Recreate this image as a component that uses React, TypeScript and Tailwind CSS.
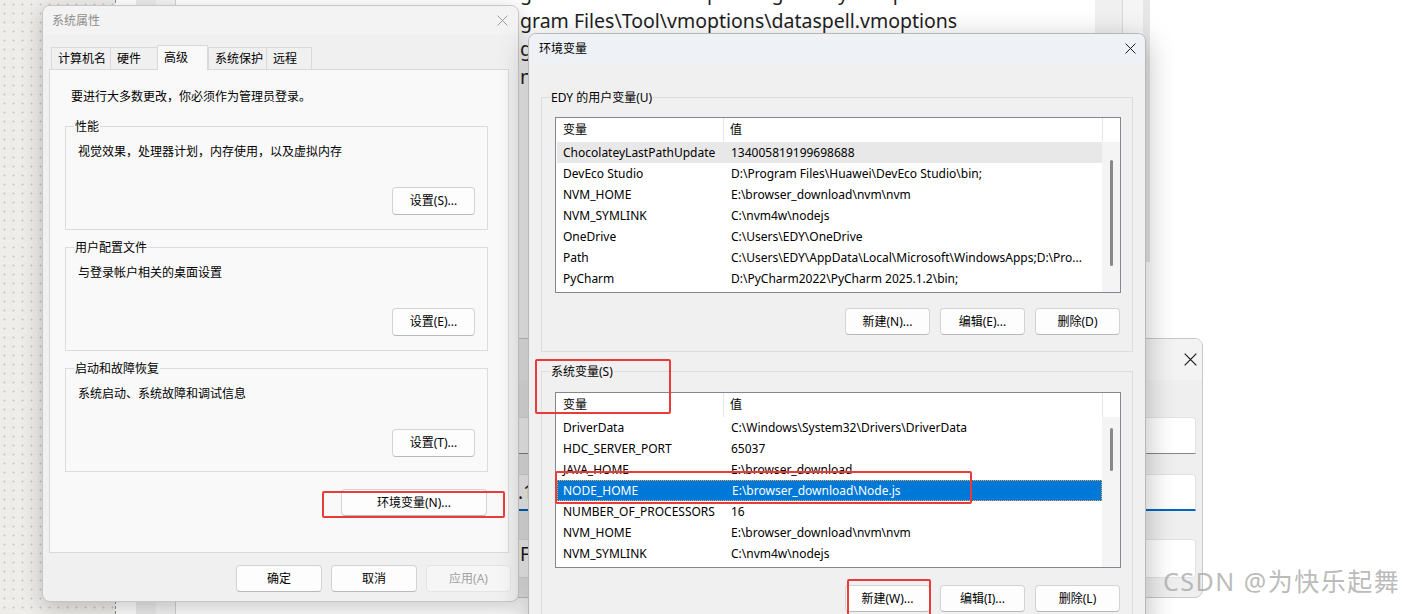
import clsx from "clsx";
import type { ReactNode } from "react";

const UI = "font-['Noto_Sans','Noto_Sans_CJK_SC',sans-serif]";

type Row = { name: string; value: string };

const USER_VARS: Row[] = [
  { name: "ChocolateyLastPathUpdate", value: "134005819199698688" },
  { name: "DevEco Studio", value: "D:\\Program Files\\Huawei\\DevEco Studio\\bin;" },
  { name: "NVM_HOME", value: "E:\\browser_download\\nvm\\nvm" },
  { name: "NVM_SYMLINK", value: "C:\\nvm4w\\nodejs" },
  { name: "OneDrive", value: "C:\\Users\\EDY\\OneDrive" },
  { name: "Path", value: "C:\\Users\\EDY\\AppData\\Local\\Microsoft\\WindowsApps;D:\\Pro..." },
  { name: "PyCharm", value: "D:\\PyCharm2022\\PyCharm 2025.1.2\\bin;" },
];

const SYSTEM_VARS: Row[] = [
  { name: "DriverData", value: "C:\\Windows\\System32\\Drivers\\DriverData" },
  { name: "HDC_SERVER_PORT", value: "65037" },
  { name: "JAVA_HOME", value: "E:\\browser_download" },
  { name: "NODE_HOME", value: "E:\\browser_download\\Node.js" },
  { name: "NUMBER_OF_PROCESSORS", value: "16" },
  { name: "NVM_HOME", value: "E:\\browser_download\\nvm\\nvm" },
  { name: "NVM_SYMLINK", value: "C:\\nvm4w\\nodejs" },
];

function CloseIcon({ className }: { className?: string }) {
  return (
    <svg viewBox="0 0 10 10" className={className} fill="none" stroke="currentColor" strokeWidth={0.9}>
      <path d="M0.5 0.5 L9.5 9.5 M9.5 0.5 L0.5 9.5" />
    </svg>
  );
}

function WinButton({
  children,
  className,
  disabled,
}: {
  children: ReactNode;
  className?: string;
  disabled?: boolean;
}) {
  return (
    <div
      className={clsx(
        "flex shrink-0 items-center justify-center rounded-[4px] border text-[12px] leading-none",
        disabled
          ? "border-[#e3e3e3] bg-[#f6f6f6] text-[#a3a3a3]"
          : "border-[#d3d3d3] border-b-[#b9b9b9] bg-[#fdfdfd] text-black",
        className
      )}
    >
      {children}
    </div>
  );
}

function GroupBox({
  label,
  className,
  children,
}: {
  label: string;
  className?: string;
  children: ReactNode;
}) {
  return (
    <fieldset className={clsx("border border-[#dcdcdc]", className)}>
      <legend className="ml-[8px] px-[1px] text-[12px] leading-[17px] text-black">{label}</legend>
      {children}
    </fieldset>
  );
}

function Tab({ label, width, active }: { label: string; width: string; active?: boolean }) {
  return (
    <div
      className={clsx(
        "flex shrink-0 border-l border-t border-[#d9d9d9] pl-[6px] text-[12px] leading-none text-black",
        width,
        active
          ? "relative z-10 -mb-px h-[25px] items-start border-r bg-[#f9f9f9] pt-[6px]"
          : "h-[22px] items-center bg-[#f0f0f0]"
      )}
    >
      {label}
    </div>
  );
}

function SettingsGroup({ label, desc, button }: { label: string; desc: string; button: string }) {
  return (
    <GroupBox label={label} className="ml-[15px] w-[423px]">
      <div className="flex h-[94px] flex-col">
        <p className="ml-[12px] mt-[8px] text-[12px] leading-[17px]">{desc}</p>
        <WinButton className="mb-[14px] mr-[12px] mt-auto h-[28px] w-[83px] self-end">{button}</WinButton>
      </div>
    </GroupBox>
  );
}

function SystemProperties() {
  return (
    <div className="absolute left-[42px] top-[5px] flex h-[597px] w-[477px] flex-col overflow-hidden rounded-[8px] border border-[#c6c6c6] bg-[#f0f0f0] shadow-[0_6px_22px_rgba(0,0,0,0.22)]">
      <div className="flex h-[29px] shrink-0 items-center justify-between bg-[#f3f3f3] pl-[9px] pr-[10px]">
        <span className="text-[12px] text-[#8e8e8e]">系统属性</span>
        <CloseIcon className="h-[11px] w-[11px] text-[#9a9a9a]" />
      </div>
      <div className="px-[6px] pt-[10px]">
        <div className="flex h-[24px] items-end pl-[2px]">
          <Tab label="计算机名" width="w-[59px]" />
          <Tab label="硬件" width="w-[47px]" />
          <Tab label="高级" width="w-[51px]" active />
          <Tab label="系统保护" width="w-[58px]" />
          <div className="flex h-[22px] w-[46px] shrink-0 items-center border-x border-t border-[#d9d9d9] bg-[#f0f0f0] pl-[6px] text-[12px] leading-none">
            远程
          </div>
        </div>
        <div className="flex h-[484px] w-[460px] flex-col border border-[#d9d9d9] bg-[#f9f9f9]">
          <p className="ml-[21px] mt-[18px] text-[12px] leading-[17px]">要进行大多数更改，你必须作为管理员登录。</p>
          <div className="mt-[13px] flex flex-col gap-[9px]">
            <SettingsGroup label="性能" desc="视觉效果，处理器计划，内存使用，以及虚拟内存" button="设置(S)..." />
            <SettingsGroup label="用户配置文件" desc="与登录帐户相关的桌面设置" button="设置(E)..." />
            <SettingsGroup label="启动和故障恢复" desc="系统启动、系统故障和调试信息" button="设置(T)..." />
          </div>
          <WinButton className="mr-[21px] mt-[17px] h-[27px] w-[146px] self-end">环境变量(N)...</WinButton>
        </div>
      </div>
      <div className="mt-[12px] flex justify-end gap-[9px] pr-[7px]">
        <WinButton className="h-[27px] w-[86px]">确定</WinButton>
        <WinButton className="h-[27px] w-[86px]">取消</WinButton>
        <WinButton className="h-[27px] w-[85px]" disabled>
          应用(A)
        </WinButton>
      </div>
    </div>
  );
}

function VarList({
  rows,
  selected,
  focused,
  thumbTop,
  thumbHeight,
}: {
  rows: Row[];
  selected: number;
  focused?: boolean;
  thumbTop: number;
  thumbHeight: number;
}) {
  return (
    <div className="ml-[13px] flex h-[176px] w-[566px] border border-[#838790] bg-white text-[12px] leading-none text-black">
      <div className="flex min-w-0 flex-1 flex-col">
        <div className="flex h-[24px] shrink-0 items-center">
          <div className="flex h-full w-[168px] items-center border-r border-[#e5e5e5] pl-[7px]">变量</div>
          <div className="pl-[6px]">值</div>
        </div>
        {rows.map((r, i) => {
          const isSel = i === selected;
          return (
            <div
              key={r.name}
              className={clsx(
                "ml-[1px] flex h-[21px] shrink-0 items-center whitespace-nowrap",
                isSel && focused && "border border-dotted border-[#f3a94a] bg-[#0078d7] text-white",
                isSel && !focused && "bg-[#e8e8e8]"
              )}
            >
              <div className={clsx("w-[167px] shrink-0", isSel && focused ? "pl-[5px]" : "pl-[6px]")}>{r.name}</div>
              <div className="pl-[7px]">{r.value}</div>
            </div>
          );
        })}
      </div>
      <div className="flex w-[18px] shrink-0 flex-col">
        <div className="h-[24px] shrink-0 border-l border-[#e5e5e5] bg-white" />
        <div className="flex flex-1 justify-center bg-[#f4f4f4]">
          <div
            className="w-[3px] rounded-full bg-[#888888]"
            style={{ marginTop: thumbTop, height: thumbHeight }}
          />
        </div>
      </div>
    </div>
  );
}

function ListButtons({ labels, top }: { labels: string[]; top: string }) {
  return (
    <div className={clsx("mr-[12px] flex justify-end gap-[10px]", top)}>
      {labels.map((l) => (
        <WinButton key={l} className="h-[27px] w-[85px]">
          {l}
        </WinButton>
      ))}
    </div>
  );
}

function EnvVariables() {
  return (
    <div className="absolute left-[528px] top-[33px] flex h-[600px] w-[618px] flex-col overflow-hidden rounded-t-[8px] border border-[#b8b8b8] bg-[#f0f0f0] shadow-[0_8px_30px_rgba(0,0,0,0.28)]">
      <div className="flex h-[29px] shrink-0 items-center justify-between bg-[#eef2f7] pl-[10px] pr-[9px]">
        <span className="text-[12px] text-black">环境变量</span>
        <CloseIcon className="h-[11px] w-[11px] text-[#1a1a1a]" />
      </div>
      <div className="px-[12px]">
        <GroupBox label="EDY 的用户变量(U)" className="mt-[26px] w-[592px] pb-[16px]">
          <div className="mt-[11px]">
            <VarList rows={USER_VARS} selected={0} thumbTop={18} thumbHeight={106} />
          </div>
          <ListButtons top="mt-[15px]" labels={["新建(N)...", "编辑(E)...", "删除(D)"]} />
        </GroupBox>
        <GroupBox label="系统变量(S)" className="mt-[11px] w-[592px] pb-[16px]">
          <div className="mt-[12px]">
            <VarList rows={SYSTEM_VARS} selected={3} focused thumbTop={11} thumbHeight={43} />
          </div>
          <ListButtons top="mt-[17px]" labels={["新建(W)...", "编辑(I)...", "删除(L)"]} />
        </GroupBox>
      </div>
    </div>
  );
}

function EditVariable() {
  return (
    <div className="absolute left-[330px] top-[338px] flex h-[260px] w-[873px] flex-col overflow-hidden rounded-[8px] border border-[#c8c8c8] bg-[#efefef]">
      <div className="flex h-[41px] shrink-0 items-center justify-end bg-[#f3f3f3] pr-[5px]">
        <CloseIcon className="h-[13px] w-[13px] text-[#1a1a1a]" />
      </div>
      <div className="flex flex-col items-end pr-[6px] text-[19px] leading-none text-[#1a1a1a]">
        <div className="mt-[37px] h-[37px] w-[776px] rounded-t-[4px] border border-[#e2e2e2] border-b-[#868686] bg-white" />
        <div className="mt-[20px] flex h-[37px] w-[776px] items-center rounded-t-[4px] border border-[#e2e2e2] border-b-2 border-b-[#0067c0] bg-white pl-[97px]">
          .1
        </div>
        <div className="mt-[28px] h-[39px] w-[776px] rounded-[4px] border border-[#e2e2e2] bg-white pl-[99px] pt-[5px]">
          F)
        </div>
      </div>
    </div>
  );
}

function Desktop() {
  return (
    <div className="flex h-full">
      <div className="h-full w-[115px] shrink-0 bg-[#eeedea] bg-[radial-gradient(circle,#c4c4c0_0.8px,transparent_1.2px)] bg-[length:9px_9px]" />
      <div className="h-full w-0 shrink-0 border-l border-dashed border-[#8e8e8e]" />
      <div className="h-full w-[20px] shrink-0 bg-white" />
      <div className="h-full w-[20px] shrink-0 bg-[#ebebeb]" />
      <div className="h-full w-[20px] shrink-0 border-r border-[#d2d2d2] bg-[#f4f4f4]" />
      <div className="h-full w-[919px] shrink-0 overflow-hidden bg-white">
        <div className="-mt-[21px] whitespace-nowrap pl-[344px] font-['Noto_Sans',sans-serif] text-[19.5px] leading-[28px] text-[#1e1e1e]">
          <div>gram Files\Tool\vmoptions\gateway.vmoptions</div>
          <div>gram Files\Tool\vmoptions\dataspell.vmoptions</div>
          <div>gram Files\Tool\vmoptions\datagrip.vmoptions</div>
          <div>nc</div>
        </div>
      </div>
      <div className="flex shrink-0 flex-col">
        <div className="flex h-[262px]">
          <div className="w-[28px] border-r border-[#d8d8d8] bg-[#f0f0f0]" />
          <div className="w-[20px] bg-[#f5f5f5]" />
          <div className="w-[7px] bg-[#e6e6e6]" />
        </div>
      </div>
      <div className="flex-1 bg-white" />
    </div>
  );
}

export default function App() {
  return (
    <div className={clsx("relative h-[614px] w-[1407px] overflow-hidden bg-white", UI)}>
      <Desktop />
      <EditVariable />
      <SystemProperties />
      <EnvVariables />

      {/* annotation boxes */}
      <div className="absolute left-[322px] top-[491px] h-[27px] w-[183px] rounded-[2px] border-2 border-[#ea3a3a]" />
      <div className="absolute left-[535px] top-[359px] h-[55px] w-[136px] rounded-[2px] border-2 border-[#ea3a3a]" />
      <div className="absolute left-[555px] top-[471px] h-[33px] w-[417px] rounded-[2px] border-2 border-[#ea3a3a]" />
      <div className="absolute left-[847px] top-[579px] h-[40px] w-[84px] rounded-[2px] border-2 border-[#ea3a3a]" />

      <div className="absolute left-[1163px] top-[569px] whitespace-nowrap text-[25px] leading-none tracking-[1.5px] text-[#a9a9a9]/80">
        CSDN @为快乐起舞
      </div>
    </div>
  );
}
